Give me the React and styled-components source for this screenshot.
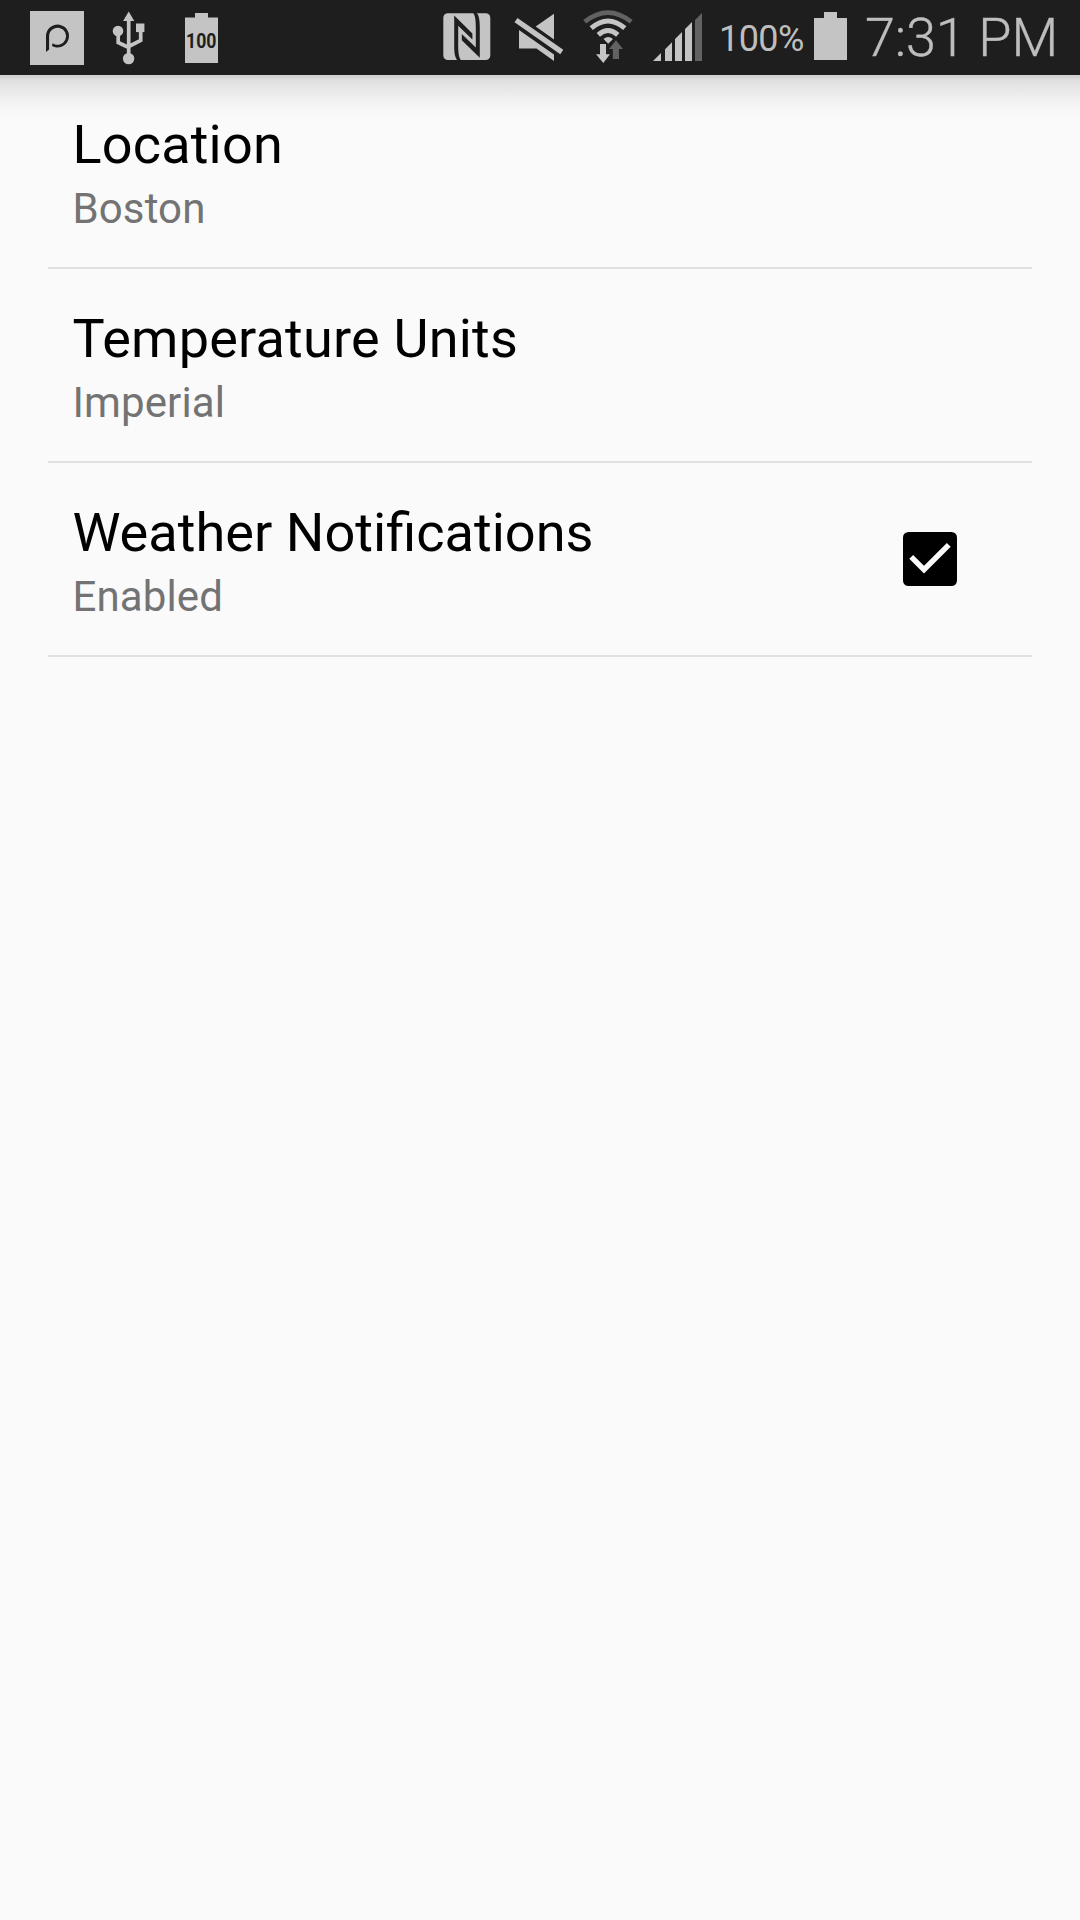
import React from "react";
import styled, { createGlobalStyle } from "styled-components";

const GlobalStyle = createGlobalStyle`
  html, body { margin: 0; padding: 0; background: #fafafa; }
  * { box-sizing: border-box; }
`;

const ON = "#c4c4c4";
const DIM = "#626262";
const BAR = "#1e1e1e";

const Screen = styled.div`
  width: 1080px;
  min-height: 1920px;
  display: flex;
  flex-direction: column;
  background: #fafafa;
  font-family: Roboto, "Noto Sans", sans-serif;
`;

const StatusBar = styled.header`
  height: 75px;
  padding: 0 24px 0 30px;
  display: flex;
  justify-content: space-between;
  background: ${BAR};
  color: #bebebe;
`;

const IconGroup = styled.div`
  display: flex;
  align-items: flex-start;
`;

const Icon = styled.svg`
  flex: none;
  display: block;
  overflow: visible;
  margin-top: 10px;
  margin-left: ${(p) => p.$gap || 0}px;
  fill: ${ON};
`;

const BatteryLevel = styled.span`
  width: 88px;
  margin-left: 17px;
  font-size: 36px;
  line-height: 42px;
  letter-spacing: -0.6px;
  margin-top: 18px;
  white-space: nowrap;
`;

const Clock = styled.time`
  width: 191px;
  margin-left: 18px;
  margin-top: 5px;
  font-size: 54px;
  font-weight: 300;
  line-height: 65px;
  letter-spacing: -0.2px;
  -webkit-text-stroke: 0.4px #bebebe;
  white-space: nowrap;
`;

const Settings = styled.main`
  flex: 1;
  padding: 0 48px;
  background: linear-gradient(
      to bottom,
      #d2d2d2 0,
      #d2d2d2 3px,
      #dcdcdc 3px,
      #e6e6e6 12px,
      #f0f0f0 24px,
      #f8f8f8 36px,
      #fafafa 46px
    )
    no-repeat;
`;

const Preference = styled.section`
  height: 194px;
  padding: 38px 69px 0 24.4px;
  display: flex;
  justify-content: space-between;
  border-bottom: 2px solid #e0e0e0;
`;

const Title = styled.h2`
  margin: 0;
  font-size: ${(p) => p.$size || 54}px;
  font-weight: 400;
  line-height: 63px;
  color: #000;
  letter-spacing: ${(p) => p.$tracking || 0}px;
`;

const Summary = styled.p`
  margin: 8px 0 0;
  font-size: 42px;
  line-height: 49px;
  letter-spacing: 0.15px;
  color: #737373;
`;

const Checkbox = styled.button`
  width: 66px;
  height: 66px;
  margin: 25px 0 0;
  padding: 0;
  border: 0;
  background: none;
  display: flex;
  align-items: center;
  justify-content: center;
`;

function PIcon() {
  return (
    <Icon width="54" height="56" viewBox="30 10 54 56">
      <rect x="30" y="11" width="54" height="54" />
      <path d="M46 36A11.5 11.5 0 1 1 52 46.1L52.6 43.2A8.5 8.5 0 1 0 49.1 36V49.5L46 51.9Z" fill={BAR} />
    </Icon>
  );
}

function UsbIcon() {
  return (
    <Icon $gap={28} width="34" height="56" viewBox="112 10 34 56">
      <path d="M128.7 11.5L134.3 21H123.1Z" />
      <circle cx="118" cy="31" r="5.3" />
      <circle cx="128.6" cy="58.6" r="5.7" />
      <rect x="136" y="23.5" width="8.4" height="8.6" />
      <path d="M128.7 18V56M118.2 31V42.5L128.7 47.5M140.7 30V40.3L128.7 46.5" fill="none" stroke={ON} strokeWidth="3.7" />
    </Icon>
  );
}

const FullLabel = styled.text`
  font: 700 20.5px Roboto, sans-serif;
  fill: ${BAR};
`;

function UsbBatteryIcon() {
  return (
    <Icon $gap={39} width="33" height="56" viewBox="185 10 33 56">
      <path d="M185 17.5H195V13H208V17.5H218V63H185Z" />
      <FullLabel x="186.1" y="48" textLength="30.4" lengthAdjust="spacingAndGlyphs">100</FullLabel>
    </Icon>
  );
}

function NfcIcon() {
  return (
    <Icon width="48" height="56" viewBox="443 10 48 56">
      <rect x="443.3" y="13.2" width="47" height="46.8" rx="4.5" />
      <path d="M454.2 15.5L472.4 33.4V39.4L458.2 25.8V46C458.2 54 459.2 58 461 60.2H457.2C455 57.5 454.2 53 454.2 46Z" fill={BAR} />
      <path d="M479.8 57.8L461.8 40.2V34L475.8 47.6V27C475.8 19.5 475 15.3 473.2 13H476.8C479 15.7 479.8 20 479.8 27Z" fill={BAR} />
    </Icon>
  );
}

function MuteIcon() {
  return (
    <Icon $gap={23} width="50" height="56" viewBox="514 10 50 56">
      <path d="M554 13.7V39.5L535.7 26.5ZM519 30L554 54.5V61L536.5 48.4H519Z" />
      <path d="M516 20.1L561.8 52" fill="none" stroke={ON} strokeWidth="5.2" />
    </Icon>
  );
}

function WifiIcon() {
  return (
    <Icon $gap={19} width="50" height="56" viewBox="583 10 50 56">
      <g fill="none" stroke={ON} strokeWidth="5">
        <path d="M584.7 21.8Q608 3.4 631.2 21.8" stroke={DIM} strokeWidth="4.6" />
        <path d="M591.2 28.2Q608 13.8 624.8 28.2" />
        <path d="M598.3 34.8Q608 26.2 617.8 34.8" />
      </g>
      <path d="M603.5 39Q608 34.8 613 39L608.2 43.8Z" />
      <path d="M600 44H606V54.3H610L603.3 63L596 54.3H600Z" />
      <path d="M612.8 59V49H609L616 40.3L623 49H619V59Z" fill={DIM} />
    </Icon>
  );
}

function SignalIcon() {
  return (
    <Icon $gap={20} width="49" height="56" viewBox="653 10 49 56">
      <path d="M653 61L661 53V61ZM665 61V49.2L672 42.2V61ZM675 61V39L682 32V61ZM685 61V29L692 22V61Z" />
      <path d="M695 61V20L702 13V61Z" fill={DIM} />
    </Icon>
  );
}

function BatteryIcon() {
  return (
    <Icon $gap={7} width="33" height="56" viewBox="814 10 33 56">
      <path d="M814 18H824V12H837V18H847V60H814Z" />
    </Icon>
  );
}

function CheckIcon() {
  return (
    <svg width="54" height="54" viewBox="0 0 54 54">
      <rect width="54" height="54" rx="5.5" fill="#000" />
      <path d="M8.2 24.9L21 37.7L45.8 12.9" fill="none" stroke="#fafafa" strokeWidth="5.5" />
    </svg>
  );
}

function PreferenceItem({ title, summary, tracking, size, checkable }) {
  return (
    <Preference>
      <div>
        <Title $tracking={tracking} $size={size}>{title}</Title>
        <Summary>{summary}</Summary>
      </div>
      {checkable && (
        <Checkbox role="checkbox" aria-checked="true" aria-label={title}>
          <CheckIcon />
        </Checkbox>
      )}
    </Preference>
  );
}

export default function App() {
  return (
    <Screen>
      <GlobalStyle />
      <StatusBar>
        <IconGroup>
          <PIcon />
          <UsbIcon />
          <UsbBatteryIcon />
        </IconGroup>
        <IconGroup>
          <NfcIcon />
          <MuteIcon />
          <WifiIcon />
          <SignalIcon />
          <BatteryLevel>100%</BatteryLevel>
          <BatteryIcon />
          <Clock>7:31 PM</Clock>
        </IconGroup>
      </StatusBar>
      <Settings>
        <PreferenceItem title="Location" summary="Boston" tracking={0.2} />
        <PreferenceItem title="Temperature Units" summary="Imperial" tracking={0.22} />
        <PreferenceItem title="Weather Notifications" summary="Enabled" size={54.15} checkable />
      </Settings>
    </Screen>
  );
}
